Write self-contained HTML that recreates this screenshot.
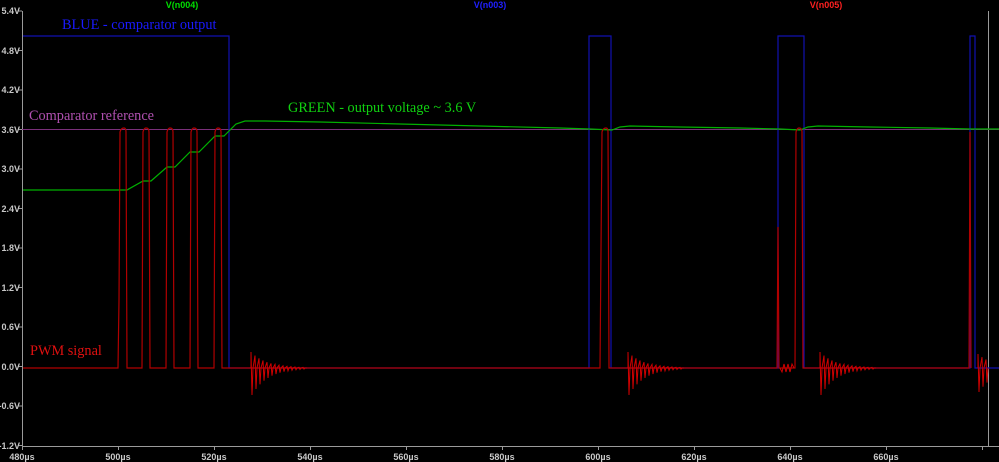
<!DOCTYPE html>
<html><head><meta charset="utf-8"><style>
html,body{margin:0;padding:0;background:#000;width:999px;height:462px;overflow:hidden}
svg{display:block}
.ax{font-family:"Liberation Sans",sans-serif;font-size:9px;font-weight:bold;fill:#c8c8c8}
.lb{font-family:"Liberation Serif",serif;font-size:14.3px}
</style></head><body>
<svg id="s" width="999" height="462" viewBox="0 0 999 462" xmlns="http://www.w3.org/2000/svg">
<rect width="999" height="462" fill="#000"/>
<g stroke="#9a9a9a" stroke-width="1" fill="none">
<line x1="22.5" y1="11" x2="22.5" y2="447"/>
<line x1="22" y1="446.5" x2="999" y2="446.5"/>
<line x1="988.5" y1="11" x2="988.5" y2="447"/>
</g>
<g id="ticks" stroke="#9a9a9a"></g>
<g class="ax" text-anchor="end">
<text x="20" y="14">5.4V</text><text x="20" y="54">4.8V</text><text x="20" y="93">4.2V</text>
<text x="20" y="133">3.6V</text><text x="20" y="172">3.0V</text><text x="20" y="212">2.4V</text>
<text x="20" y="251">1.8V</text><text x="20" y="291">1.2V</text><text x="20" y="330">0.6V</text>
<text x="20" y="370">0.0V</text><text x="20" y="409">-0.6V</text><text x="20" y="449">-1.2V</text>
</g>
<g class="ax" text-anchor="middle">
<text x="22" y="460">480µs</text><text x="118" y="460">500µs</text><text x="214" y="460">520µs</text>
<text x="310" y="460">540µs</text><text x="406" y="460">560µs</text><text x="502" y="460">580µs</text>
<text x="598" y="460">600µs</text><text x="694" y="460">620µs</text><text x="790" y="460">640µs</text>
<text x="886" y="460">660µs</text>
</g>
<g class="ax" text-anchor="middle">
<text x="182" y="8" style="fill:#00e000">V(n004)</text>
<text x="490" y="8" style="fill:#2020ff">V(n003)</text>
<text x="826" y="8" style="fill:#ff2020">V(n005)</text>
</g>
<line x1="22" y1="129.5" x2="999" y2="129.5" stroke="#7a2f7a" stroke-width="1"/>
<polyline fill="none" stroke="#1010b0" stroke-width="1.2" points="23,36 229,36 229,368 589,368 589,36 611,36 611,368 778,368 778,36 804,36 804,368 970,368 970,36 975,36 975,368 999,368"/>
<polyline fill="none" stroke="#00b000" stroke-width="1.2" points="23,190 118,190 127,190 143,181 151,181 167,167 175,167 190,152 199,152 215,136 224,136 236,124 245,121 265,121 320,122 400,124 480,126 560,128 590,129 612,130 620,127 630,126 680,127 740,128 780,129 800,130 808,127 818,126 870,127 930,128 970,129 999,129"/>
<path fill="none" stroke="#b00000" stroke-width="1.2" d="M23,368 L118,368 L119,300 L120,132 Q121,128 124,128 Q126,128 126,132 L127,368 L142,368 L143,132 Q144,128 146,128 Q149,128 149,132 L150,368 L166,368 L167,132 Q168,128 170,128 Q173,128 173,132 L174,368 L190,368 L191,132 Q192,128 194,128 Q197,128 197,132 L198,368 L214,368 L215,132 Q216,128 218,128 Q221,128 221,132 L222,368 L600,368 L602,132 Q603,128 606,128 Q608,128 608,132 L609,368 L777,368 L778,227 L779,368 L795,368 L796,132 Q797,128 799,128 Q802,128 802,132 L803,368 L969,368 L970,132 L971,368"/>
<path id="ring" fill="none" stroke="#d00000" stroke-width="1"/>
<text class="lb" x="62" y="29" fill="#1a1aff">BLUE - comparator output</text>
<text class="lb" x="29" y="120" fill="#b050b0">Comparator reference</text>
<text class="lb" x="288" y="112" fill="#10d010">GREEN - output voltage ~ 3.6 V</text>
<text class="lb" x="30" y="355" fill="#e01010">PWM signal</text>
</svg>
<script>
(function(){
var t='';
for(var x=22;x<=988;x+=96){t+='<line x1="'+(x+.5)+'" y1="446" x2="'+(x+.5)+'" y2="450"/>';}
for(var i=0;i<=11;i++){var y=11+i*39.5;t+='<line x1="18" y1="'+y+'" x2="22" y2="'+y+'"/>';}
document.getElementById('ticks').innerHTML=t;
function ring(x0,len,up,dn){var d='M'+x0+',368';for(var k=0;k<len;k+=4){var a=Math.exp(-k/16);d+=' L'+(x0+k)+','+(368-up*a)+' L'+(x0+k+1)+','+(368+dn*a)+' L'+(x0+k+2)+',368';}d+=' L'+(x0+len)+',368';return d;}
var d=ring(251,56,16,27)+' '+ring(628,56,16,27)+' '+ring(820,56,16,27)+' '+ring(978,10,14,24)+' M780,368 L782,372 L784,364 L786,372 L788,364 L790,372 L792,364 L794,368';
document.getElementById('ring').setAttribute('d',d);
})();
</script>
</body></html>
